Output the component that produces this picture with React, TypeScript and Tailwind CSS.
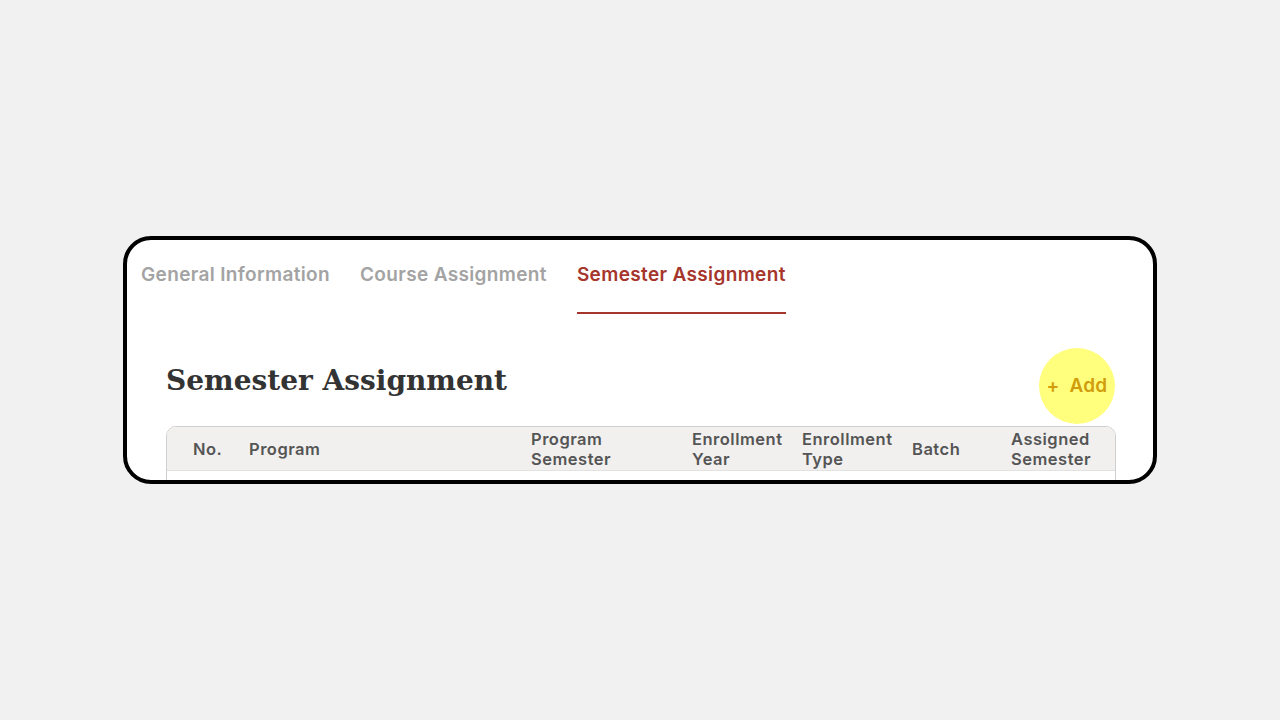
import React from "react";

const tabs = ["General Information", "Course Assignment", "Semester Assignment"];
const active = "Semester Assignment";

const columns: { label: React.ReactNode }[] = [
  { label: "No." },
  { label: "Program" },
  { label: <>Program<br />Semester</> },
  { label: <>Enrollment<br />Year</> },
  { label: <>Enrollment<br />Type</> },
  { label: "Batch" },
  { label: <>Assigned<br />Semester</> },
];

const Tabs = () => (
  <div className="flex gap-[30px] pl-[14px] pt-[21px]">
    {tabs.map((t) => (
      <div
        key={t}
        className={
          t === active
            ? "pb-[23px] border-b-2 border-[#a6352b] text-[#a6352b] text-[19px] leading-[28px] tracking-[0.35px] font-semibold"
            : "pb-[23px] border-b-2 border-transparent text-[#a3a3a3] text-[19px] leading-[28px] tracking-[0.35px] font-semibold"
        }
      >
        {t}
      </div>
    ))}
  </div>
);

const AddButton = () => (
  <button className="mt-[2px] mr-[1px] w-[76px] h-[76px] rounded-full bg-[#ffff7d] flex items-center justify-center gap-[10px] text-[#d19d0c] text-[19px] tracking-[0.2px] font-semibold">
    <span>+</span>
    <span>Add</span>
  </button>
);

const Table = () => (
  <div className="mt-[2px] border border-[#cfcfcf] rounded-t-[10px] overflow-hidden">
    <div className="grid grid-cols-[56px_282px_161px_110px_110px_99px_1fr] items-center pl-[26px] h-[44px] bg-[#f1f0ef] border-b border-[#e2e2e2] text-[16.5px] leading-[20px] tracking-[0.5px] font-semibold text-[#555555]">
      {columns.map((c, i) => (
        <div key={i}>{c.label}</div>
      ))}
    </div>
    <div className="h-[40px] bg-white" />
  </div>
);

export default function App() {
  return (
    <div className="w-full h-screen bg-[#f1f1f1] flex items-center justify-center font-['Inter',sans-serif]">
      <div className="w-[1034px] h-[248px] bg-white border-4 border-black rounded-[28px] overflow-hidden">
        <Tabs />
        <div className="pl-[39px] pr-[37px]">
          <div className="mt-[32px] flex items-center justify-between">
            <h1 className="mb-[8px] text-[28px] leading-[36px] font-['DejaVu_Serif',serif] font-semibold text-[#333333]">
              Semester Assignment
            </h1>
            <AddButton />
          </div>
          <Table />
        </div>
      </div>
    </div>
  );
}
